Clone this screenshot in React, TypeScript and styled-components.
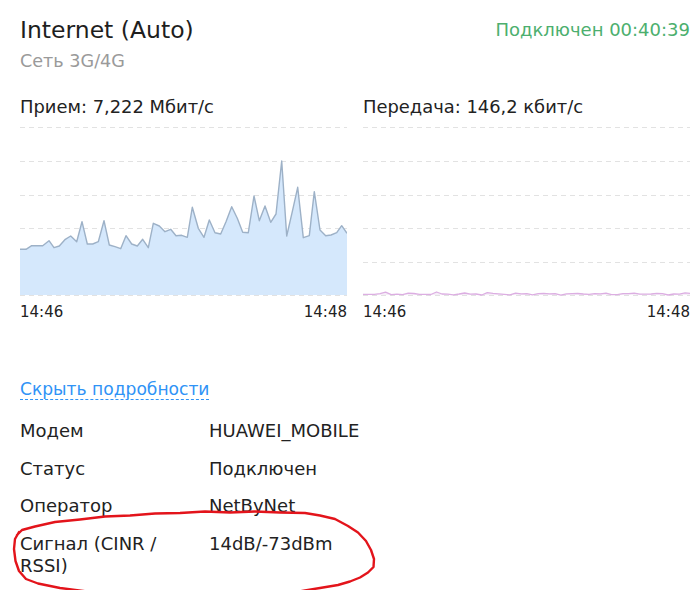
import React from 'react';
import styled, { createGlobalStyle } from 'styled-components';

const GlobalStyle = createGlobalStyle`
  html, body { margin: 0; padding: 0; background: #fff; }
  body { font-family: "DejaVu Sans", Verdana, sans-serif; color: #222; }
`;

const Page = styled.div`
  position: relative;
  width: 700px;
  height: 590px;
  overflow: hidden;
  box-sizing: border-box;
  padding: 15px 10px 0 20px;
`;

const Header = styled.div`
  display: flex;
  justify-content: space-between;
  align-items: flex-start;
`;

const TitleBlock = styled.div`
  display: flex;
  flex-direction: column;
  gap: 5px;
`;

const Title = styled.h1`
  margin: 0;
  font-size: 23.5px;
  line-height: 30px;
  font-weight: normal;
  color: #1e1e1e;
`;

const Subtitle = styled.div`
  font-size: 17.6px;
  line-height: 22px;
  color: #9a9a9a;
`;

const Status = styled.div`
  font-size: 18px;
  line-height: 30px;
  color: #4caf6e;
`;

const Charts = styled.div`
  display: grid;
  grid-template-columns: 327px 327px;
  column-gap: 16px;
  margin-top: 24px;
`;

const ChartCol = styled.div`
  display: flex;
  flex-direction: column;
`;

const ChartTitle = styled.div`
  font-size: 17.9px;
  line-height: 22px;
  color: #222;
`;

const ChartSvg = styled.svg`
  display: block;
  width: 327px;
  height: 180px;
`;

const Axis = styled.div`
  display: flex;
  justify-content: space-between;
  margin-top: 4px;
  font-size: 15px;
  line-height: 20px;
  color: #222;
`;

const LinkRow = styled.div`
  margin-top: 56px;
  line-height: 22px;
`;

const ToggleLink = styled.a`
  font-size: 17.1px;
  line-height: 22px;
  color: #2f93f6;
  text-decoration: underline dashed;
  text-decoration-thickness: 1px;
  text-underline-offset: 4px;
  cursor: pointer;
`;

const Details = styled.div`
  display: grid;
  grid-template-columns: 165px 1fr;
  column-gap: 24px;
  row-gap: 15px;
  margin-top: 19px;
  font-size: 18px;
  line-height: 22.5px;
  color: #222;
`;

const Label = styled.div``;
const Value = styled.div``;

const Annotation = styled.svg`
  position: absolute;
  left: 0;
  top: 0;
  width: 700px;
  height: 590px;
  pointer-events: none;
`;

const rxPoints: [number, number][] = [
  [20, 249.3], [26, 249.3], [31.7, 245.7], [42.7, 245.7], [49, 240.7], [54, 247.7], [59.3, 246],
  [65.3, 239.3], [70.7, 236], [76.7, 241.7], [82, 221.7], [87.3, 244], [92.7, 244], [98.3, 241.7],
  [104, 220.7], [109.3, 245], [115, 246.7], [120.7, 248.7], [126, 235.7], [131.7, 244], [137.3, 246],
  [142.7, 239.3], [148.3, 247.7], [153.3, 223.3], [159.3, 226], [165, 231.7], [170.7, 229.3],
  [176, 235.7], [181.7, 235.3], [187.3, 237.3], [192.3, 207.3], [198.3, 228.3], [204, 237.3],
  [209.3, 220], [215, 232.7], [220.7, 234], [226, 221.7], [231.7, 206.7], [237.3, 218.3],
  [242.7, 232.3], [248.3, 232.7], [254, 196], [259.3, 220.7], [265, 206], [270.7, 222.3],
  [276, 214], [281.7, 161], [286.7, 236], [292.3, 211.7], [297.7, 187.3], [303.3, 237.7],
  [309.3, 235.7], [314.3, 191.7], [320, 230], [325.7, 235.7], [331, 235], [336.7, 232.7],
  [341.7, 225.7], [347, 233.3],
];

const BASE = 177;
const gridYs = [0, 1, 2, 3, 4, 5].map((i) => Math.round(9.3 + i * 33.6) + 0.5);

const Grid: React.FC = () => (
  <g>
    {gridYs.map((y) => (
      <line key={y} x1={0} x2={327} y1={y} y2={y} stroke="#e2e2e2" strokeWidth={1} strokeDasharray="5 4" />
    ))}
  </g>
);

const RxChart: React.FC = () => {
  const pts = rxPoints.map(([x, y]) => [x - 20, y - 118]);
  const line = pts.map(([x, y], i) => `${i ? 'L' : 'M'}${x.toFixed(1)} ${y.toFixed(1)}`).join(' ');
  const area = `${line} L327 ${BASE} L0 ${BASE} Z`;
  return (
    <ChartSvg viewBox="0 0 327 180">
      <Grid />
      <path d={area} fill="#d5e8fc" />
      <path d={line} fill="none" stroke="#9db1c7" strokeWidth={1.4} strokeLinejoin="round" />
    </ChartSvg>
  );
};

const TxChart: React.FC = () => {
  const pts: [number, number][] = [];
  for (let i = 0; i <= 58; i++) {
    const x = Math.min(327, i * 5.65);
    const y = 176 + 0.7 * Math.sin(i * 1.3) + 0.5 * Math.sin(i * 2.7 + 1) - (i % 9 === 4 ? 0.8 : 0);
    pts.push([x, y]);
  }
  const line = pts.map(([x, y], i) => `${i ? 'L' : 'M'}${x.toFixed(1)} ${y.toFixed(1)}`).join(' ');
  return (
    <ChartSvg viewBox="0 0 327 180">
      <Grid />
      <path d={`${line} L327 ${BASE} L0 ${BASE} Z`} fill="#f6eef8" />
      <path d={line} fill="none" stroke="#dcaee2" strokeWidth={1.3} strokeLinejoin="round" />
    </ChartSvg>
  );
};

const ellipsePts: [number, number][] = [
  [17, 535], [22, 530], [35, 526.5], [55, 522], [80, 519.5], [105, 516.5], [130, 515.5], [155, 513.5],
  [180, 513], [205, 511.5], [230, 512.5], [255, 511.5], [280, 512.5], [305, 513], [320, 515.5],
  [335, 519], [348, 526], [358, 532.5], [366, 541], [371, 550], [374, 559], [373.5, 567], [368, 572.5],
  [360, 577.5], [350, 581.5], [338, 585], [320, 588], [305, 590.5], [290, 593], [260, 598], [150, 598],
  [95, 592.5], [60, 588], [38, 583.5], [26, 579], [19, 571], [15.5, 561], [14, 549], [15, 539], [19, 532],
];

const App: React.FC = () => {
  const ell = ellipsePts.map(([x, y], i) => `${i ? 'L' : 'M'}${x} ${y}`).join(' ');
  return (
    <>
      <GlobalStyle />
      <Page>
        <Header>
          <TitleBlock>
            <Title>Internet (Auto)</Title>
            <Subtitle>Сеть 3G/4G</Subtitle>
          </TitleBlock>
          <Status>Подключен 00:40:39</Status>
        </Header>

        <Charts>
          <ChartCol>
            <ChartTitle>Прием: 7,222 Мбит/с</ChartTitle>
            <RxChart />
            <Axis>
              <span>14:46</span>
              <span>14:48</span>
            </Axis>
          </ChartCol>
          <ChartCol>
            <ChartTitle>Передача: 146,2 кбит/с</ChartTitle>
            <TxChart />
            <Axis>
              <span>14:46</span>
              <span>14:48</span>
            </Axis>
          </ChartCol>
        </Charts>

        <LinkRow>
          <ToggleLink>Скрыть подробности</ToggleLink>
        </LinkRow>

        <Details>
          <Label>Модем</Label>
          <Value>HUAWEI_MOBILE</Value>
          <Label>Статус</Label>
          <Value>Подключен</Value>
          <Label>Оператор</Label>
          <Value>NetByNet</Value>
          <Label>Сигнал (CINR / RSSI)</Label>
          <Value>14dB/-73dBm</Value>
        </Details>

        <Annotation viewBox="0 0 700 590">
          <path d={ell} fill="none" stroke="#e3141b" strokeWidth={2.4} strokeLinejoin="round" strokeLinecap="round" />
        </Annotation>
      </Page>
    </>
  );
};

export default App;
